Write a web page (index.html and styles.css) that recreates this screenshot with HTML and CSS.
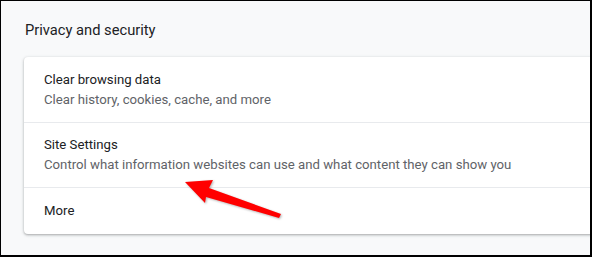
FILE: index.html
```html
<!DOCTYPE html>
<html lang="en">
<head>
    <meta charset="UTF-8">
    <meta name="viewport" content="width=device-width, initial-scale=1.0">
    <title>Privacy and security</title>
    <link rel="stylesheet" href="styles.css">
</head>
<body>
    <div class="frame">
        <h2 class="section-title">Privacy and security</h2>

        <div class="card">
            <div class="row two-line">
                <div class="row-title">Clear browsing data</div>
                <div class="row-sub">Clear history, cookies, cache, and more</div>
            </div>
            <div class="row two-line">
                <div class="row-title">Site Settings</div>
                <div class="row-sub">Control what information websites can use and what content they can show you</div>
            </div>
            <div class="row one-line">
                <div class="row-title">More</div>
            </div>
        </div>

        <!-- red callout arrow drawn over the card -->
        <svg class="arrow" width="592" height="257" viewBox="0 0 592 257">
            <polygon points="185,182 213,180 209,188 281,214 279,218 206,197 205,203" fill="#ff0000"/>
        </svg>
    </div>
</body>
</html>
```

FILE: styles.css
```css
body {
    margin: 0;
    padding: 0;
    font-family: Roboto, "Liberation Sans", sans-serif;
}

.frame {
    position: relative;
    box-sizing: border-box;
    width: 592px;
    height: 257px;
    overflow: hidden;
    background-color: #f8f9fa;
    border-style: solid;
    border-color: #000;
    border-width: 1px 2px 2px 1px;
    padding: 0 0 0 23px;
}

.section-title {
    margin: 0;
    padding: 19px 0 0 1px;
    height: 56px;
    box-sizing: border-box;
    font-size: 14.7px;
    font-weight: 400;
    line-height: 20px;
    color: #202124;
}

.card {
    margin-right: -12px;
    background-color: #fff;
    border-radius: 4px;
    box-shadow: 0 1px 2px rgba(60, 64, 67, 0.3), 0 1px 3px 1px rgba(60, 64, 67, 0.12);
}

.row {
    display: flex;
    flex-direction: column;
    justify-content: center;
    padding: 0 20px;
    font-size: 13.2px;
    line-height: 20px;
}

.row + .row {
    border-top: 1px solid #e8eaed;
}

.two-line {
    height: 64px;
}

.two-line:first-child {
    height: 65px;
}

.one-line {
    height: 46px;
}

.row-title {
    color: #202124;
}

.row-sub {
    color: #5f6368;
}

.arrow {
    position: absolute;
    left: -1px;
    top: -1px;
    filter: drop-shadow(1px 1px 1px rgba(0, 0, 0, 0.3));
}
```
